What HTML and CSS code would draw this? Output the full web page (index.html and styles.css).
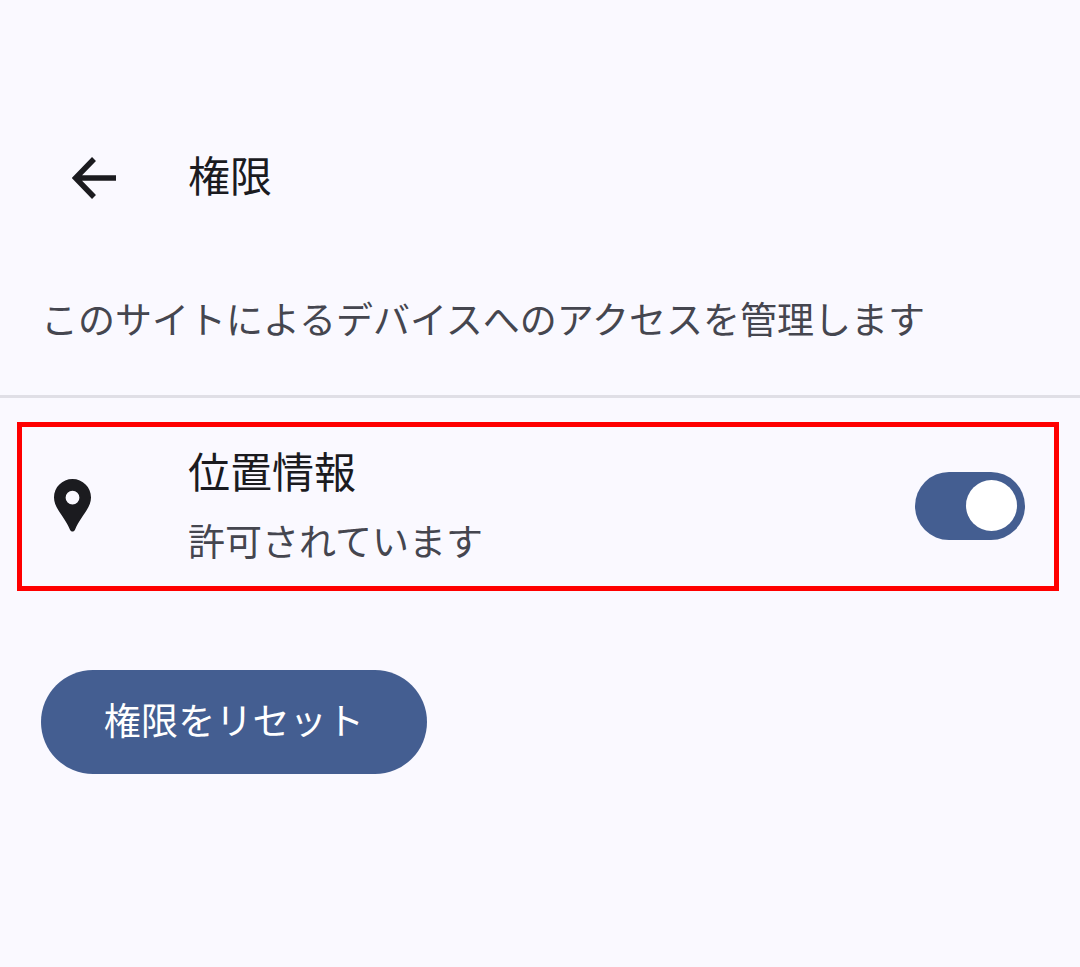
FILE: index.html
```html
<!DOCTYPE html>
<html lang="ja">
<head>
  <meta charset="UTF-8">
  <title>権限</title>
  <link rel="stylesheet" href="styles.css">
</head>
<body>
  <div class="header">
    <button class="back-button" title="戻る">
      <svg class="back-icon" viewBox="0 0 44 42">
        <path d="M44 21H4M22 2L3.500 21 22 40" fill="none" stroke="#1b1b1f" stroke-width="5.500"/>
      </svg>
    </button>
    <h1>権限</h1>
  </div>

  <p class="description">このサイトによるデバイスへのアクセスを管理します</p>
  <div class="divider"></div>

  <!-- Permission row -->
  <div class="permission-row">
    <svg class="pin-icon" viewBox="0 0 37 53">
      <path fill-rule="evenodd" fill="#1b1b1f" d="M18.500 0C8.300 0 0 8.200 0 18.500 0 29.500 11 38 16 50.800c.9 2.400 4.100 2.400 5 0C26 38 37 29.500 37 18.500 37 8.200 28.700 0 18.500 0zm0 11.800a6.900 6.900 0 1 1 0 13.800 6.900 6.900 0 0 1 0-13.800z"/>
    </svg>
    <div class="permission-info">
      <div class="permission-name">位置情報</div>
      <div class="permission-status">許可されています</div>
    </div>
    <div class="switch"><div class="switch-thumb"></div></div>
  </div>

  <button class="reset-button">権限をリセット</button>
</body>
</html>
```

FILE: styles.css
```css
body {
  margin: 0;
  height: 967px;
  overflow: hidden;
  background-color: #faf9ff;
  font-family: Roboto, "Noto Sans CJK JP", sans-serif;
  color: #1b1b1f;
}

/* Header */
.header {
  display: flex;
  align-items: center;
  height: 112px;
  padding: 122px 0 0 72px;
}

.back-button {
  display: flex;
  padding: 0;
  margin-right: 72px;
  border: none;
  background: none;
}

.back-icon {
  width: 44px;
  height: 42px;
}

.header h1 {
  margin: 0;
  font-size: 42px;
  font-weight: 400;
  line-height: 48px;
}

/* Description */
.description {
  margin: 0;
  padding: 63px 0 0 41px;
  height: 99px;
  font-size: 37px;
  line-height: 50px;
  color: #45464f;
}

.divider {
  height: 3px;
  background-color: #e0dfe6;
  margin-top: -1px;
}

/* Permission row */
.permission-row {
  display: flex;
  align-items: center;
  box-sizing: border-box;
  height: 169px;
  margin: 24px 21px 0 17px;
  border: 5px solid #ff0000;
  padding-left: 32px;
}

.pin-icon {
  width: 37px;
  height: 53px;
  margin: -2px 97px 0 0;
}

.permission-info {
  flex: 1;
  padding-top: 2px;
}

.permission-name {
  font-size: 42px;
  line-height: 56px;
}

.permission-status {
  margin-top: 17px;
  font-size: 37px;
  line-height: 50px;
  color: #45464f;
}

/* Switch */
.switch {
  display: flex;
  align-items: center;
  justify-content: flex-end;
  box-sizing: border-box;
  width: 110px;
  height: 68px;
  margin: -2px 29px 0 0;
  padding-right: 8px;
  border-radius: 34px;
  background-color: #445e91;
}

.switch-thumb {
  width: 51px;
  height: 51px;
  border-radius: 50%;
  background-color: white;
}

/* Reset button */
.reset-button {
  display: block;
  width: 386px;
  height: 104px;
  margin: 79px 0 0 41px;
  padding: 0 0 6px;
  border: none;
  border-radius: 52px;
  background-color: #445e91;
  color: white;
  font-family: inherit;
  font-size: 37px;
  letter-spacing: 0.2px;
}
```
